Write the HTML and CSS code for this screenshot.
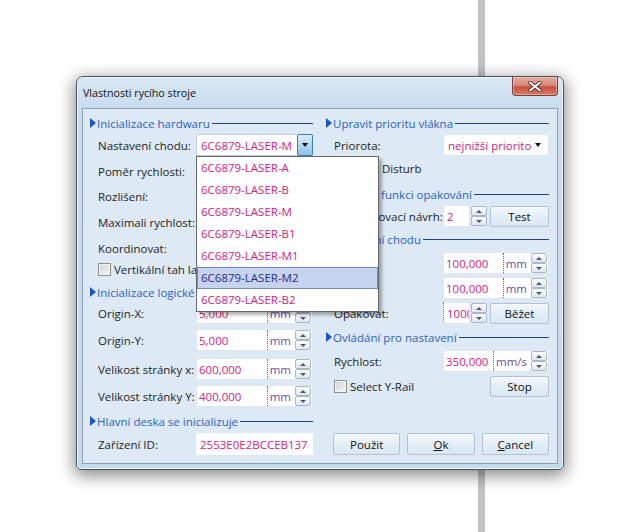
FILE: index.html
```html
<!DOCTYPE html>
<html>
<head>
    <meta charset="UTF-8">
    <title>Vlastnosti rycího stroje</title>
    <link rel="stylesheet" href="styles.css">
</head>
<body>
<div class="desk">
    <div class="rail"></div>
    <div class="window">
        <div class="titlebar">
            <span class="title">Vlastnosti rycího stroje</span>
            <span class="close">
                <svg width="14" height="11" viewBox="0 0 14 11">
                    <path d="M2 1.5 L12 9.5 M12 1.5 L2 9.5" stroke="#5b2a22" stroke-width="3.6" stroke-linecap="round"/>
                    <path d="M2 1.5 L12 9.5 M12 1.5 L2 9.5" stroke="#fff" stroke-width="2" stroke-linecap="round"/>
                </svg>
            </span>
        </div>
        <div class="client">
            <!-- levý sloupec -->
            <div class="col">
                <div class="head">Inicializace hardwaru</div>
                <div class="row m2">
                    <span class="label">Nastavení chodu:</span>
                    <div class="combo open">
                        <span class="text">6C6879-LASER-M</span>
                        <span class="drop"></span>
                        <ul class="popup">
                            <li>6C6879-LASER-A</li>
                            <li>6C6879-LASER-B</li>
                            <li>6C6879-LASER-M</li>
                            <li>6C6879-LASER-B1</li>
                            <li>6C6879-LASER-M1</li>
                            <li class="sel">6C6879-LASER-M2</li>
                            <li>6C6879-LASER-B2</li>
                        </ul>
                    </div>
                </div>
                <div class="row m4">
                    <span class="label">Poměr rychlosti:</span>
                    <div class="num"><span class="val"></span><span class="unit"></span><span class="spin"><i></i><i class="dn"></i></span></div>
                </div>
                <div class="row m3h">
                    <span class="label">Rozlišení:</span>
                    <div class="num"><span class="val"></span><span class="unit"></span><span class="spin"><i></i><i class="dn"></i></span></div>
                </div>
                <div class="row m3h">
                    <span class="label">Maximali rychlost:</span>
                    <div class="num"><span class="val"></span><span class="unit"></span><span class="spin"><i></i><i class="dn"></i></span></div>
                </div>
                <div class="row m4">
                    <span class="label">Koordinovat:</span>
                    <div class="num"><span class="val"></span><span class="unit"></span><span class="spin"><i></i><i class="dn"></i></span></div>
                </div>
                <div class="check m1"><span class="box"></span>Vertikální tah la</div>
                <div class="head m5">Inicializace logické</div>
                <div class="row m1">
                    <span class="label">Origin-X:</span>
                    <div class="num"><span class="val">5,000</span><span class="unit">mm</span><span class="spin"><i></i><i class="dn"></i></span></div>
                </div>
                <div class="row m5">
                    <span class="label">Origin-Y:</span>
                    <div class="num"><span class="val">5,000</span><span class="unit">mm</span><span class="spin"><i></i><i class="dn"></i></span></div>
                </div>
                <div class="row m7">
                    <span class="label">Velikost stránky x:</span>
                    <div class="num"><span class="val">600,000</span><span class="unit">mm</span><span class="spin"><i></i><i class="dn"></i></span></div>
                </div>
                <div class="row m5">
                    <span class="label">Velikost stránky Y:</span>
                    <div class="num"><span class="val">400,000</span><span class="unit">mm</span><span class="spin"><i></i><i class="dn"></i></span></div>
                </div>
                <div class="head m5">Hlavní deska se inicializuje</div>
                <div class="row m3">
                    <span class="label">Zařízení ID:</span>
                    <div class="field">2553E0E2BCCEB137</div>
                </div>
            </div>

            <!-- pravý sloupec -->
            <div class="col">
                <div class="head">Upravit prioritu vlákna</div>
                <div class="row m2">
                    <span class="label">Priorota:</span>
                    <div class="select"><span class="text">nejnižší priorito</span><span class="caret"></span></div>
                </div>
                <div class="check m3"><span class="box"></span>Don't Disturb</div>
                <div class="head m8">Zapnout funkci opakování</div>
                <div class="row m2">
                    <span class="label"><span class="box"></span>Opakovací návrh:</span>
                    <div class="pair">
                        <div class="short"><span class="val">2</span></div>
                        <span class="spin"><i></i><i class="dn"></i></span>
                        <button class="btn side">Test</button>
                    </div>
                </div>
                <div class="head m3">Testování chodu</div>
                <div class="row m4">
                    <span class="label"></span>
                    <div class="num"><span class="val">100,000</span><span class="unit">mm</span><span class="spin"><i></i><i class="dn"></i></span></div>
                </div>
                <div class="row m3">
                    <span class="label"></span>
                    <div class="num"><span class="val">100,000</span><span class="unit">mm</span><span class="spin"><i></i><i class="dn"></i></span></div>
                </div>
                <div class="row m3">
                    <span class="label">Opakovat:</span>
                    <div class="pair">
                        <div class="short focus"><span class="val">1000</span></div>
                        <span class="spin"><i></i><i class="dn"></i></span>
                        <button class="btn side">Běžet</button>
                    </div>
                </div>
                <div class="head m4">Ovládání pro nastavení</div>
                <div class="row m4">
                    <span class="label">Rychlost:</span>
                    <div class="num"><span class="val">350,000</span><span class="unit">mm/s</span><span class="spin"><i></i><i class="dn"></i></span></div>
                </div>
                <div class="row m3">
                    <span class="check"><span class="box"></span>Select Y-Rail</span>
                    <button class="btn side">Stop</button>
                </div>
                <div class="actions">
                    <button class="btn">Použit</button>
                    <button class="btn"><u>O</u>k</button>
                    <button class="btn"><u>C</u>ancel</button>
                </div>
            </div>
        </div>
    </div>
</div>
</body>
</html>
```

FILE: styles.css
```css
* {
    box-sizing: border-box;
}
body {
    margin: 0;
    background: #fff;
    font-family: "Open Sans", "Noto Sans", sans-serif;
    font-size: 11.5px;
    color: #1e1e1e;
}
.desk {
    position: relative;
    width: 629px;
    height: 532px;
    overflow: hidden;
}
.rail {
    position: absolute;
    left: 478px;
    top: 0;
    width: 7px;
    height: 532px;
    background: #c3c3c3;
}

/* okno dialogu */
.window {
    position: absolute;
    left: 76px;
    top: 76px;
    width: 488px;
    height: 394px;
    display: flex;
    flex-direction: column;
    border: 1px solid #46525f;
    border-radius: 7px 7px 5px 5px;
    background: linear-gradient(to bottom, #dae7f4, #c9dcef 30px, #c6d9ed);
    box-shadow: inset 0 0 0 1px rgba(255,255,255,0.75), 0 4px 16px 2px rgba(0,0,0,0.45);
}
.titlebar {
    position: relative;
    height: 31px;
    display: flex;
    align-items: center;
    padding-left: 6px;
    font-size: 10.7px;
    color: #111;
}
.close {
    position: absolute;
    right: 5px;
    top: 0;
    width: 46px;
    height: 19px;
    display: flex;
    align-items: center;
    justify-content: center;
    border: 1px solid #7d3b31;
    border-top: none;
    border-radius: 0 0 4px 4px;
    background: linear-gradient(to bottom, #e4aa9d, #d88a79 45%, #c5523f 55%, #d47965);
    box-shadow: inset 0 0 0 1px rgba(255,255,255,0.35);
}
.client {
    flex: 1;
    margin: 0 5px 5px 5px;
    border: 1px solid #8ea2b7;
    background: #dde9f5;
    display: flex;
    gap: 13px;
    padding: 5px 7px 8px 7px;
}
.col {
    width: 223px;
    display: flex;
    flex-direction: column;
}

/* nadpisy skupin */
.head {
    height: 18px;
    display: flex;
    align-items: center;
    color: #2a62c6;
    white-space: nowrap;
}
.head::before {
    content: "";
    border-left: 6px solid #1c55c5;
    border-top: 5px solid transparent;
    border-bottom: 5px solid transparent;
    margin-right: 1px;
}
.head::after {
    content: "";
    flex: 1;
    height: 1px;
    background: #24418e;
    margin-left: 2px;
}

.row {
    height: 22px;
    display: flex;
    align-items: center;
    justify-content: space-between;
    padding-left: 8px;
}
.label {
    display: flex;
    align-items: center;
    white-space: nowrap;
}
.m1 { margin-top: 1px; }
.m2 { margin-top: 2px; }
.m3 { margin-top: 3px; }
.m3h { margin-top: 3.5px; }
.m4 { margin-top: 4px; }
.m5 { margin-top: 5px; }
.m7 { margin-top: 7px; }
.m8 { margin-top: 8px; }

.check {
    height: 18px;
    display: flex;
    align-items: center;
    padding-left: 8px;
    white-space: nowrap;
}
.row .check {
    padding-left: 0;
}
.box {
    width: 13px;
    height: 13px;
    margin-right: 3px;
    border: 1px solid #8e8f8f;
    background: linear-gradient(135deg, #cfd2d6, #f7f7f7);
    box-shadow: inset 0 0 0 1px #f3f3f3;
}

/* vstupní pole */
.val {
    color: #d8217b;
    white-space: nowrap;
}
.num {
    width: 117px;
    height: 22px;
    display: flex;
    align-items: center;
    background: #fff;
    border: 1px solid #e0e6ed;
}
.col + .col .num {
    width: 106px;
}
.num .val {
    flex: 1;
    padding-left: 2px;
}
.unit {
    height: 20px;
    display: flex;
    align-items: center;
    padding: 0 4px 0 2px;
    border-left: 1px dotted #666;
    color: #6d4ea6;
}
.spin {
    width: 16px;
    height: 20px;
    display: flex;
    flex-direction: column;
    margin-right: 1px;
}
.spin i {
    flex: 1;
    display: flex;
    align-items: center;
    justify-content: center;
    border: 1px solid #a9b7c6;
    border-radius: 2px;
    background: linear-gradient(to bottom, #fbfcfd, #dfe6ee);
}
.spin i::after {
    content: "";
    border-left: 3px solid transparent;
    border-right: 3px solid transparent;
    border-bottom: 3px solid #4d5c6c;
}
.spin i.dn::after {
    border-bottom: none;
    border-top: 3px solid #4d5c6c;
}
.field {
    width: 117px;
    height: 22px;
    display: flex;
    align-items: center;
    padding-left: 4px;
    background: #fff;
    color: #d8217b;
}

/* rozbalovací seznamy */
.combo {
    position: relative;
    width: 117px;
    height: 22px;
    display: flex;
    align-items: center;
    background: #fff;
    border: 1px solid #c2ccd7;
    color: #d8217b;
}
.combo .text {
    flex: 1;
    padding-left: 4px;
    white-space: nowrap;
}
.drop {
    width: 16px;
    height: 22px;
    margin: -1px -1px -1px 0;
    display: flex;
    align-items: center;
    justify-content: center;
    border: 1px solid #3c7fb1;
    border-radius: 2px;
    background: linear-gradient(to bottom, #dbeefb, #b2d7f2 50%, #8ec3e9);
}
.drop::after,
.caret {
    content: "";
    border-left: 3.5px solid transparent;
    border-right: 3.5px solid transparent;
    border-top: 4px solid #111;
}
.popup {
    position: absolute;
    left: -1px;
    top: 21px;
    z-index: 5;
    width: 183px;
    margin: 0;
    padding: 0;
    list-style: none;
    background: #fff;
    border: 1px solid #666;
    box-shadow: 3px 3px 3px rgba(0,0,0,0.3);
}
.popup li {
    height: 22px;
    line-height: 21px;
    padding-left: 4px;
    color: #d8217b;
    white-space: nowrap;
}
.popup li.sel {
    background: #c6d3ef;
    box-shadow: inset 0 0 0 1px #7189c6;
    color: #282c88;
}
.select {
    width: 106px;
    height: 22px;
    display: flex;
    align-items: center;
    padding: 0 7px 0 4px;
    background: #fff;
    border: 1px solid #e0e6ed;
    color: #d8217b;
}
.select .text {
    flex: 1;
    white-space: nowrap;
}

/* malé pole s tlačítkem */
.pair {
    width: 106px;
    display: flex;
    align-items: center;
}
.short {
    width: 27px;
    height: 22px;
    display: flex;
    align-items: center;
    padding-left: 3px;
    overflow: hidden;
    background: #fff;
    border: 1px solid #e0e6ed;
}
.short.focus {
    border-left: 1px dotted #777;
}
.pair .spin {
    margin-left: 1px;
}

.btn {
    height: 21px;
    padding: 0;
    font: inherit;
    color: #111;
    border: 1px solid #b4c3d3;
    border-radius: 2px;
    background: linear-gradient(to bottom, #f3f8fc, #e4eef7 50%, #d9e6f2);
}
.btn.side {
    width: 59px;
    margin-left: auto;
}
.actions {
    margin-top: auto;
    padding-left: 7px;
    display: flex;
    gap: 7px;
}
.actions .btn {
    flex: 1;
    height: 22px;
}
```
